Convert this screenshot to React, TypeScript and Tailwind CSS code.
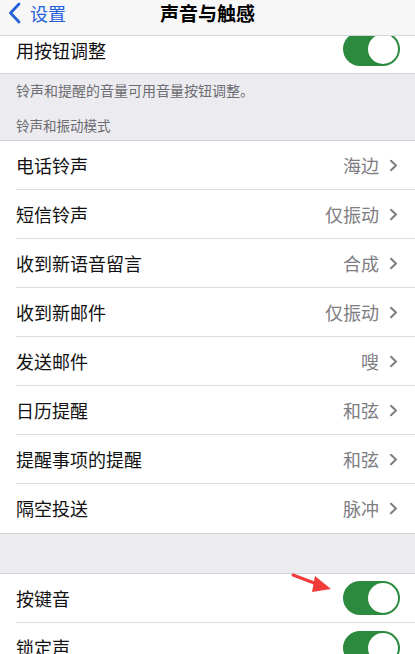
import React from 'react';

const font = '"Noto Sans CJK SC", "Noto Sans", sans-serif';

function Toggle() {
  return (
    <div className="w-[57px] h-[34px] rounded-full bg-[#2b8a3e] flex items-center justify-end pr-[2px] shrink-0">
      <div className="w-[30px] h-[30px] rounded-full bg-white" />
    </div>
  );
}

function Chevron() {
  return (
    <svg width="9" height="13" viewBox="0 0 9 13" className="ml-[10px] shrink-0">
      <path d="M2 1.8 L7 6.5 L2 11.2" fill="none" stroke="#7d7d82" strokeWidth="2" strokeLinecap="round" strokeLinejoin="round" />
    </svg>
  );
}

const rows: [string, string][] = [
  ['电话铃声', '海边'],
  ['短信铃声', '仅振动'],
  ['收到新语音留言', '合成'],
  ['收到新邮件', '仅振动'],
  ['发送邮件', '嗖'],
  ['日历提醒', '和弦'],
  ['提醒事项的提醒', '和弦'],
  ['隔空投送', '脉冲'],
];

export default function App() {
  return (
    <div className="relative w-[415px] h-[654px] overflow-hidden bg-[#ebebf0]" style={{ fontFamily: font }}>
      {/* nav bar over scrolled content */}
      <div className="absolute top-0 left-0 right-0 z-10 h-[36px] bg-[#f7f7f8] border-b border-[#d6d6da] flex items-start">
        <div className="flex items-center h-[25px] pl-[8px] text-[#2560d8]">
          <svg width="13" height="22" viewBox="0 0 13 22">
            <path d="M11 2 L2.5 11 L11 20" fill="none" stroke="#2560d8" strokeWidth="2.8" strokeLinecap="round" strokeLinejoin="round" />
          </svg>
          <span className="ml-[9px] text-[18px] leading-none">设置</span>
        </div>
        <div className="absolute left-0 right-0 top-0 h-[25px] flex items-center justify-center">
          <span className="text-[19px] font-semibold text-black leading-none">声音与触感</span>
        </div>
      </div>

      <div className="pt-[25px]">
        <div className="bg-white h-[49px] flex items-center pl-[16px] pr-[15px] border-b border-[#d4d4d8]">
          <span className="text-[18px] text-[#111] flex-1 pt-[2px]">用按钮调整</span>
          <Toggle />
        </div>

        <div className="h-[66px] flex flex-col pl-[16px] text-[#6d6d72]">
          <div className="text-[14px] mt-[6px] leading-[20px]">铃声和提醒的音量可用音量按钮调整。</div>
          <div className="text-[13.5px] mt-[15px] leading-[20px]">铃声和振动模式</div>
        </div>

        <div className="bg-white border-t border-b border-[#d4d4d8]">
          {rows.map(([label, value], i) => (
            <div key={label} className="pl-[16px]">
              <div className={`h-[49px] flex items-center pr-[17px] ${i < rows.length - 1 ? 'border-b border-[#dcdce0]' : ''}`}>
                <span className="text-[18px] text-[#111] flex-1">{label}</span>
                <span className="text-[18px] text-[#7d7d82]">{value}</span>
                <Chevron />
              </div>
            </div>
          ))}
        </div>

        <div className="h-[39px]" />

        <div className="bg-white border-t border-[#d4d4d8]">
          <div className="pl-[16px]">
            <div className="h-[49px] flex items-center pr-[15px] border-b border-[#dcdce0]">
              <span className="text-[18px] text-[#111] flex-1">按键音</span>
              <Toggle />
            </div>
          </div>
          <div className="pl-[16px]">
            <div className="h-[49px] flex items-center pr-[15px]">
              <span className="text-[18px] text-[#111] flex-1">锁定声</span>
              <Toggle />
            </div>
          </div>
        </div>
      </div>

      {/* red annotation arrow */}
      <svg className="absolute left-[290px] top-[570px] z-20" width="48" height="26" viewBox="0 0 48 26">
        <path d="M3 5 L32 16" stroke="#f23b3b" strokeWidth="3" strokeLinecap="round" />
        <path d="M41 19 L25 6 L22 22 Z" fill="#f23b3b" />
      </svg>
    </div>
  );
}
